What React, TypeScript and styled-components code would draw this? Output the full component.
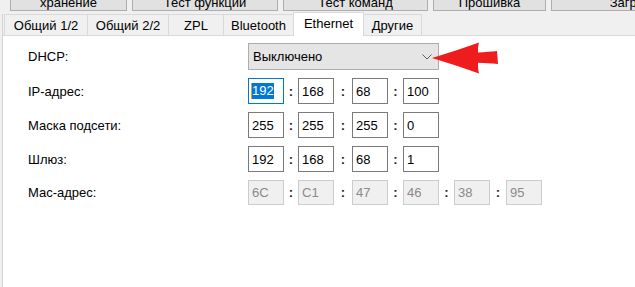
import React from 'react';
import styled, { createGlobalStyle } from 'styled-components';

type FieldState = 'focus' | 'normal' | 'disabled';

interface IOctet {
  value: string;
  selected?: boolean;
}

interface IAddressRow {
  label: string;
  state: FieldState;
  octets: IOctet[];
}

const GlobalStyle = createGlobalStyle`
  html, body {
    margin: 0;
    padding: 0;
    background: #f0f0f0;
    overflow: hidden;
  }
  body {
    font-family: 'Liberation Sans', Arial, sans-serif;
    font-size: 13px;
    color: #000;
  }
`;

const Window = styled.div`
  width: 635px;
  height: 287px;
  display: flex;
  flex-direction: column;
  overflow: hidden;
`;

const Toolbar = styled.div`
  display: flex;
  align-items: flex-end;
  gap: 5px;
  height: 11px;
  padding-left: 10px;
  flex-shrink: 0;
`;

const ToolButton = styled.button<{ $w: number }>`
  flex-shrink: 0;
  box-sizing: border-box;
  width: ${(p) => p.$w}px;
  height: 24px;
  padding: 0;
  border: 1px solid #adadad;
  background: #e1e1e1;
  display: flex;
  align-items: flex-end;
  justify-content: center;
  font: inherit;
  line-height: 14px;
  color: #000;
`;

const TabControl = styled.div`
  flex: 1;
  margin: 3px 0 0 2px;
  border-left: 1px solid #d4d4d4;
  display: flex;
  flex-direction: column;
`;

const TabRow = styled.div`
  display: flex;
  align-items: flex-end;
  height: 21px;
  padding-left: 1px;
  flex-shrink: 0;
`;

const Tab = styled.div<{ $w: number; $active?: boolean }>`
  box-sizing: border-box;
  width: ${(p) => p.$w}px;
  height: ${(p) => (p.$active ? 24 : 21)}px;
  margin-left: -1px;
  margin-bottom: ${(p) => (p.$active ? -1 : 0)}px;
  padding-bottom: ${(p) => (p.$active ? 3 : 0)}px;
  border: 1px solid #d9d9d9;
  border-bottom: none;
  background: ${(p) => (p.$active ? '#ffffff' : '#f0f0f0')};
  position: relative;
  z-index: ${(p) => (p.$active ? 1 : 0)};
  display: flex;
  align-items: center;
  justify-content: center;
  white-space: nowrap;

  &:first-child {
    margin-left: 0;
  }
`;

const Panel = styled.div`
  flex: 1;
  background: #ffffff;
  border-top: 1px solid #d9d9d9;
  padding: 7px 0 0 25px;
`;

const Form = styled.div`
  display: grid;
  grid-template-columns: 220px auto;
  row-gap: 8px;
  align-items: center;
  justify-content: start;
`;

const Label = styled.div`
  white-space: nowrap;
`;

const ComboWrap = styled.div`
  position: relative;
  width: 191px;
`;

const Combo = styled.div`
  box-sizing: border-box;
  width: 191px;
  height: 27px;
  padding: 0 6px 0 4px;
  border: 1px solid #adadad;
  background: #e5e5e5;
  display: flex;
  align-items: center;
  justify-content: space-between;
`;

const Arrow = styled.svg`
  position: absolute;
  left: 184px;
  top: -1px;
`;

const Octets = styled.div`
  display: flex;
  align-items: center;
`;

const Field = styled.div<{ $state: FieldState }>`
  box-sizing: border-box;
  width: 36px;
  height: ${(p) => (p.$state === 'disabled' ? 25 : 26)}px;
  padding-left: 3px;
  border: 1px solid
    ${(p) => (p.$state === 'focus' ? '#0078d7' : p.$state === 'disabled' ? '#cccccc' : '#7a7a7a')};
  background: ${(p) => (p.$state === 'disabled' ? '#f0f0f0' : '#ffffff')};
  color: ${(p) => (p.$state === 'disabled' ? '#8a8a8a' : '#000000')};
  display: flex;
  align-items: center;
`;

const Selection = styled.span`
  background: #0078d7;
  color: #ffffff;
  line-height: 16px;
  box-shadow: -1px 0 0 #f39a1e;
`;

const Colon = styled.span<{ $w: number }>`
  width: ${(p) => p.$w}px;
  text-align: center;
  font-weight: bold;
  color: #222;
`;

const toolButtons = [
  { label: 'хранение', w: 117 },
  { label: 'Тест функции', w: 146 },
  { label: 'Тест команд', w: 145 },
  { label: 'Прошивка', w: 113 },
  { label: 'Загрузка', w: 170 },
];

const tabs = [
  { label: 'Общий 1/2', w: 84 },
  { label: 'Общий 2/2', w: 82 },
  { label: 'ZPL', w: 56 },
  { label: 'Bluetooth', w: 71 },
  { label: 'Ethernet', w: 71, active: true },
  { label: 'Другие', w: 59 },
];

const colonWidths = [14, 18, 15, 15, 16];

const rows: IAddressRow[] = [
  {
    label: 'IP-адрес:',
    state: 'normal',
    octets: [{ value: '192', selected: true }, { value: '168' }, { value: '68' }, { value: '100' }],
  },
  {
    label: 'Маска подсети:',
    state: 'normal',
    octets: [{ value: '255' }, { value: '255' }, { value: '255' }, { value: '0' }],
  },
  {
    label: 'Шлюз:',
    state: 'normal',
    octets: [{ value: '192' }, { value: '168' }, { value: '68' }, { value: '1' }],
  },
  {
    label: 'Мас-адрес:',
    state: 'disabled',
    octets: [{ value: '6C' }, { value: 'C1' }, { value: '47' }, { value: '46' }, { value: '38' }, { value: '95' }],
  },
];

function AddressFields({ state, octets }: { state: FieldState; octets: IOctet[] }) {
  return (
    <Octets>
      {octets.map((o, i) => (
        <React.Fragment key={i}>
          {i > 0 && <Colon $w={colonWidths[i - 1]}>:</Colon>}
          <Field $state={o.selected ? 'focus' : state}>
            {o.selected ? <Selection>{o.value}</Selection> : o.value}
          </Field>
        </React.Fragment>
      ))}
    </Octets>
  );
}

export default function App() {
  return (
    <Window>
      <GlobalStyle />
      <Toolbar>
        {toolButtons.map((b) => (
          <ToolButton key={b.label} $w={b.w} type="button">
            {b.label}
          </ToolButton>
        ))}
      </Toolbar>
      <TabControl>
        <TabRow>
          {tabs.map((t) => (
            <Tab key={t.label} $w={t.w} $active={t.active}>
              {t.label}
            </Tab>
          ))}
        </TabRow>
        <Panel>
          <Form>
            <Label>DHCP:</Label>
            <ComboWrap>
              <Combo>
                <span>Выключено</span>
                <svg width="10" height="6" viewBox="0 0 10 6">
                  <path d="M0.5 0.5 L5 5 L9.5 0.5" fill="none" stroke="#606060" strokeWidth="1" />
                </svg>
              </Combo>
              <Arrow width="68" height="32" viewBox="0 0 68 32">
                <path
                  d="M0 16 C16 11 32 6 47 0.5 C46 4 46 7 46 10.5 C53 10 59 9.5 65 9 L66 22 C59 21.5 53 21 46 20.8 C46 24.5 46 28 47 31.5 C32 26 16 21 0 16 Z"
                  fill="#ee1c1c"
                />
              </Arrow>
            </ComboWrap>
            {rows.map((r) => (
              <React.Fragment key={r.label}>
                <Label>{r.label}</Label>
                <AddressFields state={r.state} octets={r.octets} />
              </React.Fragment>
            ))}
          </Form>
        </Panel>
      </TabControl>
    </Window>
  );
}
